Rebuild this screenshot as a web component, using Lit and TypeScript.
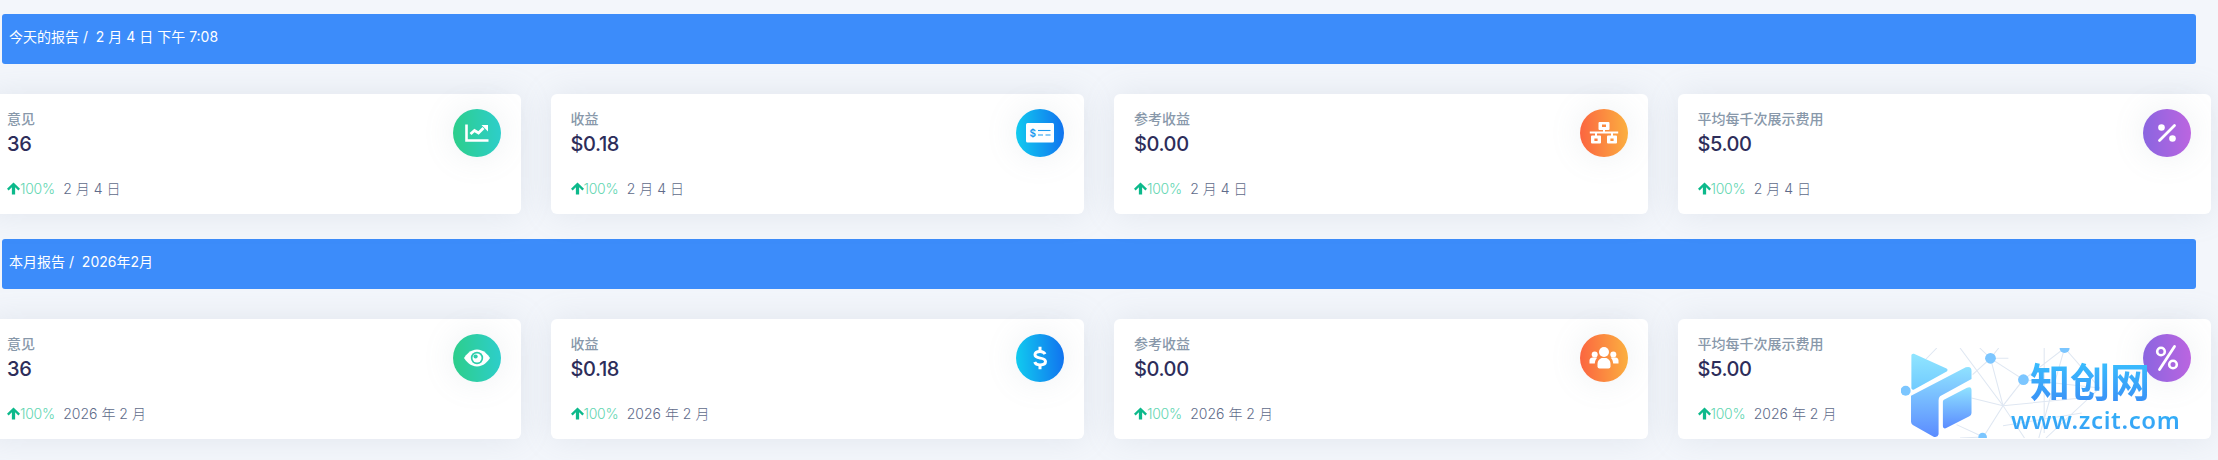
import { LitElement, html, css, svg } from "lit";
import { customElement } from "lit/decorators.js";

const icons: Record<string, unknown> = {
  chart: svg`<path d="M1.500 3.500v16h22" fill="none" stroke="#fff" stroke-width="2.600"/>
    <path d="M5.500 13l4-3.500 4 2.500 5-5" fill="none" stroke="#fff" stroke-width="2.800"/>
    <path d="M16.500 4h6.500v6.500z" fill="#fff"/>`,
  check: svg`<rect x="-2" y="2" width="28" height="19.500" rx="1.500" fill="#fff"/>
    <text x="1.500" y="15.800" font-family="Inter, sans-serif" font-size="10" font-weight="600" fill="#1b9bf0">$</text>
    <path d="M10 9.500h12.500" stroke="#1b9bf0" stroke-width="1.100"/>
    <path d="M10 14h5M17.500 14h5" stroke="#1b9bf0" stroke-width="1.100"/>`,
  network: svg`<path fill-rule="evenodd" fill="#fff" d="M7.500 1h9a1 1 0 0 1 1 1v6a1 1 0 0 1-1 1h-9a1 1 0 0 1-1-1v-6a1 1 0 0 1 1-1zM10 3.500v2.500h4V3.500z"/>
    <path d="M-2.200 11.500h28.400" stroke="#fff" stroke-width="2"/>
    <path d="M12 8v4M4 11v4M20 11v4" stroke="#fff" stroke-width="2"/>
    <path fill-rule="evenodd" fill="#fff" d="M0 14.500h8a1 1 0 0 1 1 1v6a1 1 0 0 1-1 1h-8a1 1 0 0 1-1-1v-6a1 1 0 0 1 1-1zM2.400 17.500v2.500h3.200v-2.500z"/>
    <path fill-rule="evenodd" fill="#fff" d="M16 14.500h8a1 1 0 0 1 1 1v6a1 1 0 0 1-1 1h-8a1 1 0 0 1-1-1v-6a1 1 0 0 1 1-1zM18.400 17.500v2.500h3.200v-2.500z"/>`,
  percent: svg`<circle cx="6.500" cy="6.500" r="3.300" fill="#fff"/>
    <circle cx="17.500" cy="17.500" r="3.300" fill="#fff"/>
    <path d="M19.500 4.500L4.500 19.500" stroke="#fff" stroke-width="2.800" stroke-linecap="round"/>`,
  eye: svg`<path fill="#fff" d="M12 3.500C5.500 3.500 1 8.800-1 12c2 3.200 6.500 8.500 13 8.500s11-5.300 13-8.500c-2-3.200-6.500-8.500-13-8.500z"/>
    <circle cx="12" cy="12" r="6.200" fill="#2dceab"/>
    <circle cx="12" cy="12" r="4.500" fill="#fff"/>
    <circle cx="10.600" cy="10.500" r="2.100" fill="#2dceab"/>`,
  dollar: svg`<path d="M17 8.200c-.7-1.600-2.500-2.700-5-2.700-2.900 0-5 1.300-5 3.300 0 4.900 10.500 1.700 10.500 6.700 0 2.100-2.300 3.400-5.500 3.400-2.600 0-4.600-1.100-5.300-2.900" fill="none" stroke="#fff" stroke-width="3"/>
    <path d="M12 .7v5M12 18.300v5" stroke="#fff" stroke-width="3"/>`,
  users: svg`<circle cx="12" cy="6" r="5" fill="#fff"/>
    <circle cx="2.700" cy="8.500" r="3" fill="#fff"/>
    <circle cx="21.300" cy="8.500" r="3" fill="#fff"/>
    <path fill="#fff" d="M5.500 20.500v-2.500c0-3.500 2.700-6 5-6h3c2.300 0 5 2.500 5 6v2.500a2 2 0 0 1-2 2H7.500a2 2 0 0 1-2-2z"/>
    <path fill="#fff" d="M-2.500 17.500v-3c0-1.800 1.500-3 3-3h3.800c.6 0 .9.300.5.800-1.200 1.300-1.800 3.100-2 5.200z"/>
    <path fill="#fff" d="M26.500 17.500v-3c0-1.800-1.500-3-3-3h-3.800c-.6 0-.9.300-.5.800 1.200 1.300 1.800 3.100 2 5.200z"/>`,
  bigpercent: svg`<circle cx="6" cy="5.500" r="3.800" fill="none" stroke="#fff" stroke-width="2.600"/>
    <circle cx="18" cy="18.500" r="3.800" fill="none" stroke="#fff" stroke-width="2.600"/>
    <path d="M19.500 .5L4.500 23.500" stroke="#fff" stroke-width="2.800" stroke-linecap="round"/>`,
};

const sections = [
  {
    title: "今天的报告 /  2 月 4 日 下午 7:08",
    period: "2 月 4 日",
    icons: ["chart", "check", "network", "percent"],
  },
  {
    title: "本月报告 /  2026年2月",
    period: "2026 年 2 月",
    icons: ["eye", "dollar", "users", "bigpercent"],
  },
];

const metrics = [
  { label: "意见", value: "36", tone: "green" },
  { label: "收益", value: "$0.18", tone: "blue" },
  { label: "参考收益", value: "$0.00", tone: "orange" },
  { label: "平均每千次展示费用", value: "$5.00", tone: "purple" },
];

@customElement("app-root")
export class AppRoot extends LitElement {
  static styles = css`
    :host {
      display: block;
      position: relative;
      width: 2218px;
      height: 460px;
      overflow: hidden;
      padding-top: 14px;
      box-sizing: border-box;
      background: #f3f6fb;
      font-family: Inter, "Noto Sans CJK SC", sans-serif;
    }

    .section {
      margin-bottom: 25px;
    }

    .bar {
      box-sizing: border-box;
      width: 2194px;
      height: 50px;
      margin-left: 2px;
      padding: 11.5px 7px 0;
      border-radius: 3px;
      background: #3c8cfa;
      color: #fff;
      font-size: 14px;
      font-weight: 400;
      line-height: 21px;
      white-space: pre;
    }

    .row {
      display: grid;
      grid-template-columns: repeat(4, 533.5px);
      gap: 30px;
      margin: 30px 0 0 -13px;
    }

    .card {
      box-sizing: border-box;
      height: 120px;
      padding: 15px 20px;
      border-radius: 6px;
      background: #fff;
      box-shadow: 0 0 32px 0 rgba(136, 152, 170, 0.16);
    }

    .head {
      display: flex;
      justify-content: space-between;
    }

    .label {
      margin-top: -1px;
      color: #8898aa;
      font-size: 14px;
      font-weight: 500;
      line-height: 21px;
    }

    .value {
      margin-top: 3px;
      color: #2d2d5a;
      font-size: 20px;
      font-weight: 500;
      line-height: 24px;
      letter-spacing: -0.4px;
    }

    .badge {
      display: flex;
      align-items: center;
      justify-content: center;
      width: 48px;
      height: 48px;
      border-radius: 50%;
      box-shadow: 0 0 32px 0 rgba(136, 152, 170, 0.15);
    }

    .badge svg {
      width: 24px;
      height: 24px;
      overflow: visible;
    }

    .green {
      background: linear-gradient(87deg, #2dce89, #2dcecc);
    }

    .blue {
      background: linear-gradient(87deg, #11cdef, #1171ef);
    }

    .orange {
      background: linear-gradient(87deg, #fb6340, #fbb140);
    }

    .purple {
      background: linear-gradient(87deg, #8965e0, #bc65e0);
    }

    .foot {
      display: flex;
      align-items: center;
      margin-top: 21px;
      font-size: 14px;
      font-weight: 300;
      line-height: 21px;
    }

    .foot svg {
      width: 13px;
      height: 13px;
    }

    .rate {
      margin-right: 8.5px;
      color: #63d6b2;
      letter-spacing: -0.3px;
    }

    .period {
      color: #606b8a;
    }

    .mark {
      position: absolute;
      left: 1901px;
      top: 348px;
      width: 281px;
      height: 90px;
      pointer-events: none;
    }

    .mark svg {
      display: block;
      width: 100%;
      height: 100%;
    }

    .brand,
    .site {
      position: absolute;
      color: transparent;
      -webkit-background-clip: text;
      background-clip: text;
      white-space: nowrap;
    }

    .brand {
      left: 129px;
      top: 8px;
      background-image: linear-gradient(180deg, #39c4ff, #3a8ff6);
      font-family: "Noto Sans CJK SC", sans-serif;
      font-size: 40px;
      font-weight: 700;
      line-height: 48px;
    }

    .site {
      left: 110px;
      top: 56px;
      background-image: linear-gradient(180deg, #2fb8f8, #3a9cf6);
      font-family: "Noto Sans", sans-serif;
      font-size: 24px;
      font-weight: 600;
      line-height: 32px;
      letter-spacing: 0.6px;
    }
  `;

  renderMark() {
    return html`<div class="mark">
      <svg viewBox="675 145 785 270" preserveAspectRatio="none">
        <defs>
          <linearGradient id="wm" x1="0" y1="0" x2="0" y2="1">
            <stop offset="0" stop-color="#8fe2ff" />
            <stop offset="1" stop-color="#5b8cff" />
          </linearGradient>
          <linearGradient id="wt" x1="0" y1="0" x2="0" y2="1">
            <stop offset="0" stop-color="#8fe4ff" />
            <stop offset="1" stop-color="#72ccff" />
          </linearGradient>
        </defs>
        <g fill="none" stroke="#dfe7f2" stroke-width="3">
          <path d="M775 145L745 178M840 145L960 318L905 412M925 176L875 225M925 176L1017 240L960 318M895 145L925 176L975 176M948 145L925 176" />
          <path d="M925 176L960 318L1020 415M1017 240L1132 145L1060 415M1132 145L1230 265L1080 415M1075 145L1075 400M1017 240L1230 265M872 295L960 318L1180 295M830 375L905 412L840 415M960 378L1180 340" />
        </g>
        <path fill="url(#wt)" stroke="url(#wt)" stroke-width="10" stroke-linejoin="round" d="M709 167L800 211L709 265z" />
        <path fill="url(#wm)" d="M703 288L856 203Q872 198 872 214V238L784 290Q780 294 780 302V404Q778 414 766 411L708 376Q703 372 703 366z" />
        <path fill="url(#wm)" d="M795 300L858 265Q872 258 872 272V340Q872 347 866 350L800 386Q792 388 792 380V306Q792 302 795 300z" />
        <g fill="#7cc6ff">
          <ellipse cx="688" cy="273" rx="14" ry="15" />
          <ellipse cx="925" cy="176" rx="15" ry="16" />
          <ellipse cx="1017" cy="240" rx="15" ry="16" />
          <ellipse cx="1132" cy="145" rx="14" ry="15" />
          <ellipse cx="903" cy="412" rx="12" ry="13" />
        </g>
      </svg>
      <span class="brand">知创网</span>
      <span class="site">www.zcit.com</span>
    </div>`;
  }

  render() {
    return html`
      ${sections.map(
        (s) => html`<div class="section">
          <div class="bar">${s.title}</div>
          <div class="row">
            ${metrics.map(
              (m, i) => html`<div class="card">
                <div class="head">
                  <div>
                    <div class="label">${m.label}</div>
                    <div class="value">${m.value}</div>
                  </div>
                  <div class="badge ${m.tone}">
                    <svg viewBox="0 0 24 24">${icons[s.icons[i]]}</svg>
                  </div>
                </div>
                <div class="foot">
                  <svg viewBox="0 0 24 24">
                    <path fill="#0cb98b" d="M12 1L24 12.500l-3 3-6-6V23H9V9.500l-6 6-3-3z" />
                  </svg>
                  <span class="rate">100%</span>
                  <span class="period">${s.period}</span>
                </div>
              </div>`
            )}
          </div>
        </div>`
      )}
      ${this.renderMark()}
    `;
  }
}
